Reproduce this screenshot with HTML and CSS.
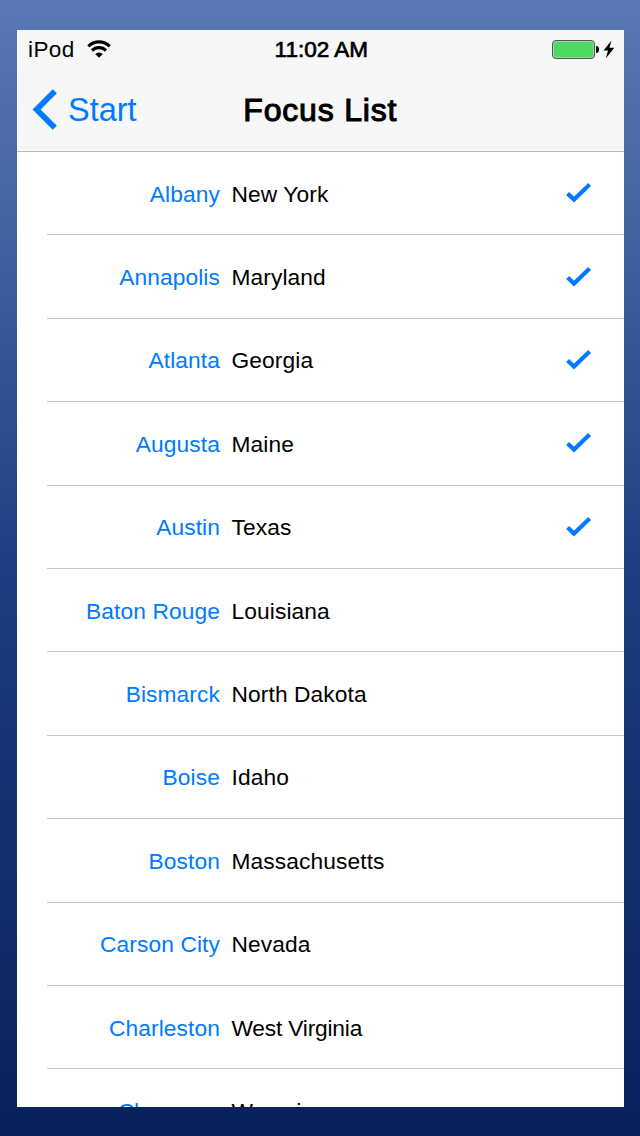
FILE: index.html
```html
<!DOCTYPE html>
<html lang="en">
<head>
  <meta charset="UTF-8" />
  <meta name="viewport" content="width=device-width, initial-scale=1" />
  <title>Focus List</title>
  <link rel="stylesheet" href="styles.css">
</head>
<body>
  <svg class="defs" width="0" height="0" aria-hidden="true">
    <symbol id="check" viewBox="0 0 26 22">
      <path d="M1.6 11.5L8 17.5L23.6 2.6" fill="none" stroke="#007aff" stroke-width="4.2"/>
    </symbol>
  </svg>

  <div class="screen">
    <header>
      <div class="status-bar">
        <div class="carrier">
          <span>iPod</span>
          <svg class="wifi" viewBox="0 0 24 18" aria-hidden="true">
            <path d="M1.3 6.4A15 15 0 0 1 22.7 6.4M5 10.6A9.8 9.8 0 0 1 19 10.6" fill="none" stroke="#000" stroke-width="3.1"/>
            <path d="M8.2 14A5.4 5.4 0 0 1 15.8 14L12 17.8z" fill="#000"/>
          </svg>
        </div>
        <div class="time">11:02 AM</div>
        <div class="power">
          <div class="battery"></div>
          <div class="battery-tip"></div>
          <svg class="bolt" viewBox="0 0 12 19" aria-hidden="true">
            <path d="M8.5 0.5L0.5 10.5H5L2.8 18.5L11.3 7.8H6.4z" fill="#000"/>
          </svg>
        </div>
      </div>
      <nav class="nav-bar">
        <a class="back">
          <svg viewBox="0 0 25 41" aria-hidden="true">
            <path d="M22.8 2.2L4.6 20.5L22.8 38.8" fill="none" stroke="#007aff" stroke-width="5.8"/>
          </svg>
          <span>Start</span>
        </a>
        <h1>Focus List</h1>
      </nav>
    </header>

    <ul class="list">
      <li><span class="capital">Albany</span><span class="state">New York</span><svg class="check"><use href="#check"/></svg></li>
      <li><span class="capital">Annapolis</span><span class="state">Maryland</span><svg class="check"><use href="#check"/></svg></li>
      <li><span class="capital">Atlanta</span><span class="state">Georgia</span><svg class="check"><use href="#check"/></svg></li>
      <li><span class="capital">Augusta</span><span class="state">Maine</span><svg class="check"><use href="#check"/></svg></li>
      <li><span class="capital">Austin</span><span class="state">Texas</span><svg class="check"><use href="#check"/></svg></li>
      <li><span class="capital">Baton Rouge</span><span class="state">Louisiana</span></li>
      <li><span class="capital">Bismarck</span><span class="state">North Dakota</span></li>
      <li><span class="capital">Boise</span><span class="state">Idaho</span></li>
      <li><span class="capital">Boston</span><span class="state">Massachusetts</span></li>
      <li><span class="capital">Carson City</span><span class="state">Nevada</span></li>
      <li><span class="capital">Charleston</span><span class="state tight">West Virginia</span></li>
      <li><span class="capital tight">Cheyenne</span><span class="state">Wyoming</span></li>
    </ul>
  </div>
</body>
</html>
```
FILE: styles.css
```css
* {
  box-sizing: border-box;
  margin: 0;
  padding: 0;
}
body {
  height: 1136px;
  padding: 30px 16.5px 29.5px 17px;
  background: linear-gradient(#5a79b5 0%, #3a5999 28%, #1d3e81 50%, #08215a 100%);
  font-family: "Liberation Sans", Helvetica, Arial, sans-serif;
  overflow: hidden;
}
.defs {
  position: absolute;
}
.screen {
  height: 1076.5px;
  background: #fff;
  color: #000;
  overflow: hidden;
}

/* Header */
header {
  height: 122px;
  background: #f7f7f7;
  border-bottom: 1px solid #b9b9bb;
}
.status-bar {
  display: grid;
  grid-template-columns: 1fr auto 1fr;
  align-items: center;
  height: 38px;
  padding: 0 9px 0 11px;
  font-size: 22.5px;
}
.carrier {
  display: flex;
  align-items: center;
  gap: 12px;
  letter-spacing: 0.4px;
}
.carrier span,
.time {
  padding-top: 2px;
}
.wifi {
  width: 24px;
  height: 18px;
}
/* medium weight: regular face with a thin outline */
.time {
  -webkit-text-stroke: 0.7px #000;
}
.power {
  display: flex;
  align-items: center;
  justify-content: flex-end;
}
.battery {
  width: 43px;
  height: 19px;
  border: 1px solid #555;
  border-radius: 4px;
  background: #4cd964;
  box-shadow: inset 0 0 0 1px #a5d5ad;
}
.battery-tip {
  width: 3px;
  height: 7px;
  margin-left: 1px;
  border-radius: 0 3px 3px 0;
  background: #000;
}
.bolt {
  width: 12px;
  height: 19px;
  margin-left: 4px;
}
.nav-bar {
  display: grid;
  grid-template-columns: 1fr auto 1fr;
  align-items: center;
  height: 83px;
  padding: 0 15px;
}
.back {
  display: flex;
  align-items: center;
  gap: 11px;
  color: #007aff;
  font-size: 32.5px;
}
.back span,
h1 {
  padding-top: 2px;
}
.back svg {
  width: 25px;
  height: 41px;
}
h1 {
  font-size: 32px;
  font-weight: normal;
  letter-spacing: 0.8px;
  -webkit-text-stroke: 1.1px #000;
}

/* Rows */
.list {
  list-style: none;
}
.list li {
  display: flex;
  align-items: center;
  height: 83.4px;
  margin-left: 30px;
  padding-right: 32px;
  border-bottom: 1px solid #c8c7cc;
  font-size: 22.75px;
  letter-spacing: 0.1px;
}
.capital,
.state {
  padding-top: 2px;
}
.capital {
  width: 173px;
  text-align: right;
  color: #007aff;
}
.state {
  flex: 1;
  margin-left: 11.5px;
}
.tight {
  letter-spacing: -0.2px;
}
.check {
  width: 26px;
  height: 22px;
}
```
